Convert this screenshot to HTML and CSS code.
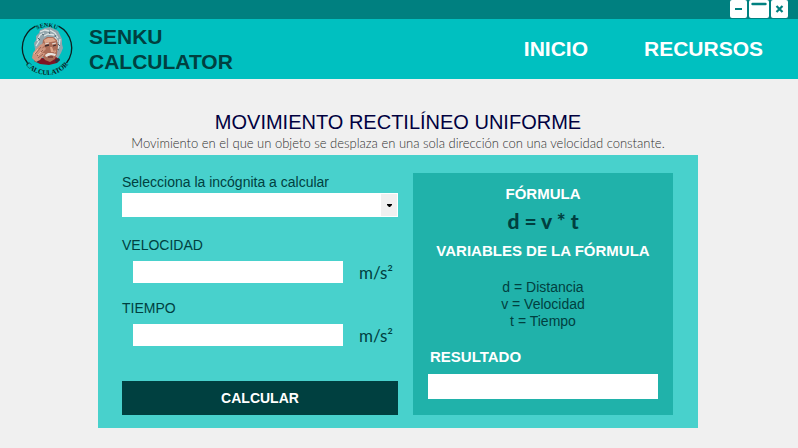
FILE: index.html
```html
<!DOCTYPE html>
<html lang="es">
<head>
<meta charset="utf-8">
<meta name="viewport" content="width=device-width, initial-scale=1">
<title>Senku Calculator</title>
<link rel="stylesheet" href="styles.css">
</head>
<body>
<div class="titlebar">
  <button class="win" type="button" aria-label="Minimizar"><svg width="17" height="18" viewBox="0 0 17 18"><path d="M5 9h7" stroke="#008080" stroke-width="2"/></svg></button>
  <button class="win win-wide" type="button" aria-label="Maximizar"><svg width="20" height="18" viewBox="0 0 20 18"><path d="M3.500 4h13" stroke="#008080" stroke-width="2.400" stroke-linecap="round"/></svg></button>
  <button class="win" type="button" aria-label="Cerrar"><svg width="17" height="18" viewBox="0 0 17 18"><path d="M5.500 6l6 6M11.500 6l-6 6" stroke="#008080" stroke-width="2.200"/></svg></button>
</div>
<header class="header">
  <svg class="logo" width="54" height="60" viewBox="0 0 54 60" role="img" aria-label="Senku Calculator">
    <defs>
      <path id="top" d="M6 29a21 21 0 0 1 42 0"/>
      <path id="bottom" d="M0 29a27 27 0 0 0 54 0"/>
    </defs>
    <g fill="none" stroke="#0b2020" stroke-width="1.300">
      <path d="M15.500 7.200A24.500 24.500 0 0 0 7.500 44"/>
      <path d="M38.500 7.200A24.500 24.500 0 0 1 46.500 44"/>
    </g>
    <g class="logo-text" text-anchor="middle">
      <text class="logo-top"><textPath href="#top" startOffset="50%">SENKU</textPath></text>
      <text><textPath href="#bottom" startOffset="50%">CALCULATOR</textPath></text>
    </g>
    <path d="M15 30l-1-6 2-3 0-4 3-3 1-3 5-2 5-1 4 2 4 2 2 4 2 4 0 5 1 4-2 5-3 5-5 2-18-4z" fill="#93a6ad"/>
    <path d="M17 22l3-6 4-2M20 13l5-2 4 1M30 11l5 3 3 5M40 20l-1 7-3 6M16 27l3-5M24 17l4-2 6 1M35 18l3 5" fill="none" stroke="#dde4e4" stroke-width="1.300"/>
    <path d="M18 19l2 2M22 15l2 1M29 13l1 2M36 16l-1 2M38 25l2 2M37 30l2 1" stroke="#4d646d" stroke-width="1"/>
    <path d="M14 42l4-4 9 2 9-2 4 3-3 3-8 2-9-1z" fill="#7d1424"/>
    <path d="M15 41l3-2 1 4-3 0zM35 41l4-2 1 2-4 3z" fill="#28333f"/>
    <path d="M23 21l4-3 6 0 4 3 1 6-1 8-2 5-5 3-5-2-4-6z" fill="#ab6c57"/>
    <path d="M24 21l4-2 5 0 3 3-5 1-6 1zM30 28l2 0 2 5-3 0zM35 30l1 3-2 1z" fill="#dfa78c"/>
    <path d="M25 25l4-1M32 25l4-1" stroke="#e5dfd8" stroke-width="1.200"/>
    <path d="M25 27l4-1M33 27l3-1" stroke="#402b2c" stroke-width="1.300"/>
    <path d="M25 36l3-2 4 0 4 1-1 2-4-1-5 2z" fill="#e8e3df"/>
    <path d="M28 38h5" stroke="#582529" stroke-width="1"/>
    <path d="M12 39l1-5 3-4 4-4 4-2 1 2-4 4 4-2 1 2-4 4 3 0-1 2-4 5-4 2z" fill="#cf947e"/>
    <path d="M15 35l6-7M17 37l6-6M18 39l5-4" stroke="#8b5547" stroke-width=".800"/>
    <path d="M14 35l4-5M18 36l3-3" stroke="#efc2ab" stroke-width=".900"/>
  </svg>
  <h1 class="brand">SENKU<br>CALCULATOR</h1>
  <nav class="nav"><a href="#inicio">INICIO</a><a href="#recursos">RECURSOS</a></nav>
</header>
<main class="main">
  <h2 class="title">MOVIMIENTO RECTILÍNEO UNIFORME</h2>
  <p class="subtitle">Movimiento en el que un objeto se desplaza en una sola dirección con una velocidad constante.</p>
  <div class="card">
    <form class="form">
      <label for="unknown">Selecciona la incógnita a calcular</label>
      <div class="select-box">
        <select id="unknown"><option></option><option>Distancia</option><option>Velocidad</option><option>Tiempo</option></select>
        <span class="arrow"><svg width="5" height="3" viewBox="0 0 5 3"><path d="M0 0h5v1L3 3H2L0 1z"/></svg></span>
      </div>
      <label class="field-label" for="speed">VELOCIDAD</label>
      <div class="field"><input id="speed" type="text"><span class="unit">m/s²</span></div>
      <label class="field-label" for="time">TIEMPO</label>
      <div class="field"><input id="time" type="text"><span class="unit">m/s²</span></div>
      <button class="submit" type="button">CALCULAR</button>
    </form>
    <section class="panel">
      <h3>FÓRMULA</h3>
      <p class="formula">d = v * t</p>
      <h3>VARIABLES DE LA FÓRMULA</h3>
      <p class="variables">d = Distancia<br>v = Velocidad<br>t = Tiempo</p>
      <label class="result-label" for="result">RESULTADO</label>
      <input class="result" id="result" type="text" readonly>
    </section>
  </div>
</main>
</body>
</html>
```
FILE: styles.css
```css
* { box-sizing: border-box; }
body {
  margin: 0;
  background: #f0f0f0;
  color: #004040;
  font: 14px/18px "Liberation Sans", Arial, sans-serif;
}
h1, h2, h3, p { margin: 0; }
input, select, button { border: 0; border-radius: 0; padding: 0; font: inherit; }
input, select { background: #fff; min-width: 0; }

.titlebar {
  display: flex;
  justify-content: flex-end;
  gap: 2px;
  height: 19px;
  padding-right: 10px;
  background: #008080;
}
.win { width: 17px; height: 18px; border-radius: 2px; background: #fff; }
.win-wide { width: 20px; }
.win svg { display: block; }

.header {
  display: flex;
  align-items: center;
  height: 60px;
  padding: 0 35px 0 20px;
  background: #00c0c0;
}
.logo { flex: none; overflow: visible; }
.logo-text { font: bold 7px "Liberation Serif", serif; fill: #0b2020; }
.logo-top { font-size: 6px; }
.brand { margin-left: 15px; font-size: 21px; line-height: 25px; }
.nav { display: flex; gap: 56px; margin-left: auto; }
.nav a { color: #fff; font-size: 21px; line-height: 24px; font-weight: bold; text-decoration: none; }

.main { padding: 30px 100px 20px 98px; }
.title { color: #000040; font-size: 20px; line-height: 26px; font-weight: normal; text-align: center; }
.subtitle {
  margin-bottom: 4px;
  color: #303030;
  font: 300 13px/16px Lato, sans-serif;
  text-align: center;
}
.card {
  display: grid;
  grid-template-columns: 276fr 260fr;
  gap: 15px;
  padding: 18px 25px 13px 24px;
  background: #48d1cc;
}
.form { display: flex; flex-direction: column; }
.select-box { position: relative; height: 24px; margin: 2px 0 19px; }
.select-box select { appearance: none; width: 100%; height: 24px; }
.arrow {
  position: absolute;
  inset: 1px 1px 1px auto;
  display: grid;
  place-items: center;
  width: 16px;
  background: #f0f0f0;
  pointer-events: none;
}
.field {
  display: flex;
  gap: 16px;
  height: 22px;
  margin: 7px 5px 16px 11px;
}
.field input { flex: 1; height: 22px; }
.unit { font: 17px/24px Lato, sans-serif; }
.submit {
  height: 34px;
  margin-top: auto;
  background: #004040;
  color: #fff;
  font-weight: bold;
}
.panel {
  display: flex;
  flex-direction: column;
  padding: 12px 15px 16px;
  background: #20b2aa;
  text-align: center;
}
.panel h3, .result-label { color: #fff; font-size: 15px; line-height: 18px; font-weight: bold; }
.formula { margin: 5px 0 8px; font: 900 21px/26px Lato, sans-serif; }
.variables { margin: 19px 0 18px; line-height: 17px; }
.result-label { padding-left: 2px; text-align: left; }
.result { height: 25px; margin-top: 8px; }
```
